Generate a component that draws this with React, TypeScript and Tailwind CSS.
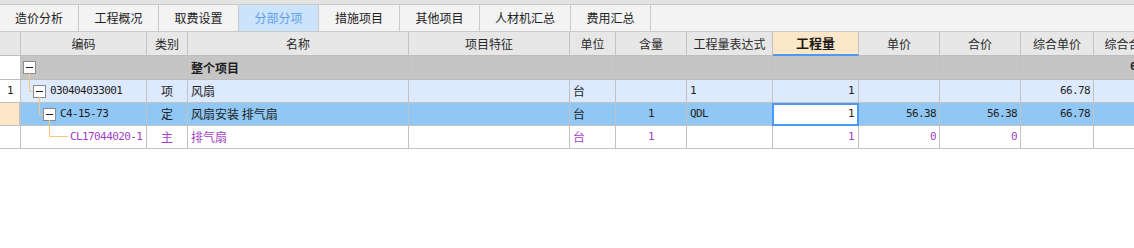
import React from "react";

const W = [
  "w-[21px]",
  "w-[126px]",
  "w-[41px]",
  "w-[221px]",
  "w-[161px]",
  "w-[46px]",
  "w-[71px]",
  "w-[86px]",
  "w-[86px]",
  "w-[81px]",
  "w-[81px]",
  "w-[73px]",
  "w-[70px]",
];

const cn = "font-['Noto_Sans_CJK_SC',sans-serif]";
const mono = "font-['DejaVu_Sans_Mono',monospace] text-[11px] tracking-[-0.6px]";

const tabs = [
  { label: "造价分析", w: "w-[79px]" },
  { label: "工程概况", w: "w-[80px]" },
  { label: "取费设置", w: "w-[80px]" },
  { label: "分部分项", w: "w-[80px]", active: true },
  { label: "措施项目", w: "w-[81px]" },
  { label: "其他项目", w: "w-[80px]" },
  { label: "人材机汇总", w: "w-[91px]" },
  { label: "费用汇总", w: "w-[80px]" },
];

const headers = [
  "",
  "编码",
  "类别",
  "名称",
  "项目特征",
  "单位",
  "含量",
  "工程量表达式",
  "工程量",
  "单价",
  "合价",
  "综合单价",
  "综合合价",
];

function C({
  i,
  className = "",
  children,
}: {
  i: number;
  className?: string;
  children?: React.ReactNode;
}) {
  return (
    <div
      className={`${W[i]} shrink-0 h-full border-r border-[#c2c2c2] flex items-center overflow-hidden whitespace-nowrap ${className}`}
    >
      {children}
    </div>
  );
}

function MinusBox({ className = "" }: { className?: string }) {
  return (
    <div
      className={`w-[13px] h-[13px] shrink-0 border border-[#8c8c8c] bg-white flex items-center justify-center ${className}`}
    >
      <div className="w-[7px] h-[1px] bg-[#222]" />
    </div>
  );
}

export default function App() {
  return (
    <div className={`w-[1134px] h-[248px] overflow-hidden bg-white text-[12px] text-[#1e1e1e] ${cn}`}>
      {/* tab bar */}
      <div className="h-[4px] bg-[#e2e2e2]" />
      <div className="flex h-[28px] border-y border-[#c9c9c9] bg-[#f3f3f3]">
        {tabs.map((t) => (
          <div
            key={t.label}
            className={`${t.w} shrink-0 h-full border-r border-[#c9c9c9] flex items-center justify-center ${
              t.active ? "bg-[#cce4fb] text-[#5d9fe8]" : "text-[#222]"
            }`}
          >
            {t.label}
          </div>
        ))}
      </div>

      {/* header */}
      <div className="flex h-[24px] bg-[#e7e7e7] text-[#2a2a2a]">
        {headers.map((h, i) => (
          <div
            key={i}
            className={`${W[i]} shrink-0 h-full border-r border-[#c2c2c2] flex items-center justify-center whitespace-nowrap overflow-hidden ${
              i === 8
                ? "bg-[#fde7c9] border-b-2 border-b-[#4b9bf2] font-bold text-[13px] text-[#1a1a1a]"
                : "border-b border-b-[#bdbdbd]"
            }`}
          >
            {h}
          </div>
        ))}
      </div>

      {/* body */}
      <div className="relative">
        <svg
          className="absolute left-0 top-0 pointer-events-none"
          width="80"
          height="92"
        >
          <g stroke="#f9c77e" strokeWidth="1" fill="none">
            <path d="M29.5 17 V35.5 H33" />
            <path d="M39.5 41 V58.5 H43" />
            <path d="M49.5 64 V80.5 H68" />
          </g>
        </svg>

        {/* 整个项目 */}
        <div className="flex h-[24px] border-b border-[#bdbdbd] bg-[#c5c5c5]">
          <C i={0} className="bg-white" />
          <C i={1} className="border-[#b9b9b9]">
            <MinusBox className="ml-[2px]" />
          </C>
          <C i={2} className="border-[#b9b9b9]" />
          <C i={3} className="border-[#b9b9b9] pl-[3px] font-bold">
            整个项目
          </C>
          {[4, 5, 6, 7, 8, 9, 10, 11].map((i) => (
            <C key={i} i={i} className="border-[#b9b9b9]" />
          ))}
          <C i={12} className={`justify-end pr-[3px] font-bold ${mono}`}>
            66.78
          </C>
        </div>

        {/* row 1 */}
        <div className="flex h-[23px] border-b border-[#c2c2c2] bg-[#dde9fc]">
          <C i={0} className={`bg-white justify-center ${mono}`}>
            1
          </C>
          <C i={1}>
            <MinusBox className="ml-[12px]" />
            <span className={`ml-[4px] ${mono}`}>030404033001</span>
          </C>
          <C i={2} className="justify-center">
            项
          </C>
          <C i={3} className="pl-[3px]">
            风扇
          </C>
          <C i={4} />
          <C i={5} className="pl-[3px]">
            台
          </C>
          <C i={6} />
          <C i={7} className={`pl-[3px] ${mono}`}>
            1
          </C>
          <C i={8} className={`justify-end pr-[4px] ${mono}`}>
            1
          </C>
          <C i={9} />
          <C i={10} />
          <C i={11} className={`justify-end pr-[3px] ${mono}`}>
            66.78
          </C>
          <C i={12} />
        </div>

        {/* row 2 (selected) */}
        <div className="flex h-[23px] border-b border-[#c2c2c2] bg-[#91c7f4]">
          <C i={0} className="bg-[#fee6c9] border-r-2 border-[#3d8ef0]" />
          <C i={1}>
            <MinusBox className="ml-[22px]" />
            <span className={`ml-[4px] ${mono}`}>C4-15-73</span>
          </C>
          <C i={2} className="justify-center">
            定
          </C>
          <C i={3} className="pl-[3px]">
            风扇安装 排气扇
          </C>
          <C i={4} />
          <C i={5} className="pl-[3px]">
            台
          </C>
          <C i={6} className={`justify-center ${mono}`}>
            1
          </C>
          <C i={7} className={`pl-[3px] ${mono}`}>
            QDL
          </C>
          <C i={8} className="relative overflow-visible">
            <div
              className={`absolute left-[-1px] right-[-1px] top-0 bottom-[-1px] border-2 border-[#4a9af5] bg-white flex items-center justify-end pr-[3px] ${mono}`}
            >
              1
            </div>
          </C>
          <C i={9} className={`justify-end pr-[3px] ${mono}`}>
            56.38
          </C>
          <C i={10} className={`justify-end pr-[3px] ${mono}`}>
            56.38
          </C>
          <C i={11} className={`justify-end pr-[3px] ${mono}`}>
            66.78
          </C>
          <C i={12} />
        </div>

        {/* row 3 */}
        <div className="flex h-[23px] border-b border-[#c2c2c2] bg-white text-[#a33fc5]">
          <C i={0} />
          <C i={1}>
            <span className={`ml-[49px] ${mono}`}>CL17044020-1</span>
          </C>
          <C i={2} className="justify-center">
            主
          </C>
          <C i={3} className="pl-[3px]">
            排气扇
          </C>
          <C i={4} />
          <C i={5} className="pl-[3px]">
            台
          </C>
          <C i={6} className={`justify-center ${mono}`}>
            1
          </C>
          <C i={7} />
          <C i={8} className={`justify-end pr-[4px] ${mono}`}>
            1
          </C>
          <C i={9} className={`justify-end pr-[3px] ${mono}`}>
            0
          </C>
          <C i={10} className={`justify-end pr-[3px] ${mono}`}>
            0
          </C>
          <C i={11} />
          <C i={12} />
        </div>
      </div>
    </div>
  );
}
